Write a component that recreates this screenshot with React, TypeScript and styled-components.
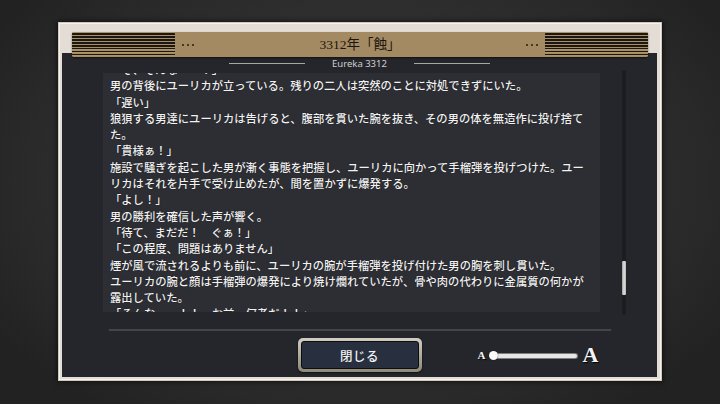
import React, { useLayoutEffect, useRef } from "react";
import styled, { createGlobalStyle } from "styled-components";

const GlobalStyle = createGlobalStyle`
  html, body { margin: 0; padding: 0; width: 720px; height: 404px; overflow: hidden; }
  body { background: #2a2a2a; font-family: "Noto Sans CJK JP", "Noto Sans", sans-serif; }
  * { box-sizing: border-box; }
`;

const Stage = styled.div`
  width: 720px;
  height: 404px;
  padding-top: 22px;
  display: flex;
  justify-content: center;
  align-items: flex-start;
  background:
    radial-gradient(ellipse 60% 70% at 50% 45%, #3a3a3a 0%, #313131 50%, #292929 80%, #222222 100%);
`;

const Frame = styled.div`
  width: 604px;
  height: 359px;
  background: #e3ddd6;
  padding: 0 5px 4px 4px;
  display: flex;
  flex-direction: column;
  box-shadow: 0 0 6px rgba(0, 0, 0, 0.75), inset 0 0 0 1px #cfc8be, inset 0 0 0 2px #f6f2ec;
`;

const Header = styled.div`
  position: relative;
  z-index: 1;
  margin: 10px 9px 0 10px;
  height: 25px;
  background: #a48a62;
  border-radius: 2px;
  display: flex;
  align-items: center;
  box-shadow: 0 1px 2px rgba(0, 0, 0, 0.55);
`;

const Stripes = styled.div`
  width: 103px;
  height: 100%;
  background: repeating-linear-gradient(
    to bottom,
    #b09569 0px,
    #a48a62 1.4px,
    #1b1814 1.4px,
    #1b1814 2.9px
  );
  border-radius: 2px;
`;

const Dots = styled.div<{ $side: "left" | "right" }>`
  display: flex;
  gap: 3px;
  margin: ${(p) => (p.$side === "left" ? "0 0 0 7px" : "0 7px 0 0")};
`;

const Dot = styled.span`
  width: 2px;
  height: 2px;
  border-radius: 50%;
  background: #231e17;
`;

const Title = styled.div`
  flex: 1;
  text-align: center;
  font-family: "Liberation Serif", "Noto Sans CJK JP", serif;
  font-size: 13.5px;
  color: #1a1610;
  line-height: 25px;
`;

const Panel = styled.div`
  margin-top: -4px;
  flex: 1;
  background: #25262b;
  padding-top: 4px;
  display: flex;
  flex-direction: column;
`;

const Subtitle = styled.div`
  height: 12px;
  display: flex;
  align-items: center;
  justify-content: center;
  gap: 27px;
  font-family: "Noto Sans", sans-serif;
  font-size: 9.5px;
  color: #cfcfcf;
`;

const SubLine = styled.span`
  width: 76px;
  height: 1px;
  background: #a6a6a6;
`;

const Body = styled.div`
  margin-top: 4px;
  padding-left: 41px;
  height: 239px;
  display: flex;
`;

const TextBox = styled.div`
  width: 497px;
  height: 239px;
  background: #2d2e34;
  overflow: hidden;
  padding: 0 10px 0 7px;
`;

const Para = styled.p`
  margin: 0;
  font-family: "Noto Sans CJK JP", sans-serif;
  font-weight: 500;
  font-size: 11.3px;
  line-height: 16.3px;
  color: #f2f2f2;
  text-shadow: 0 0 1px rgba(0, 0, 0, 0.8);
`;

const Track = styled.div`
  position: relative;
  margin: -3px 0 -3px 22px;
  width: 4px;
  background: #1c1d21;
`;

const Thumb = styled.div<{ $top: number; $height: number }>`
  position: absolute;
  left: 0;
  width: 4px;
  top: ${(p) => p.$top}px;
  height: ${(p) => p.$height}px;
  background: linear-gradient(to right, #9c9c9c, #e0e0e0 50%, #b4b4b4);
  border-radius: 1px;
`;

const Divider = styled.div`
  margin: 17px 0 0 47px;
  width: 502px;
  height: 2px;
  background: #42464c;
`;

const Footer = styled.div`
  margin-top: 7px;
  height: 34px;
  display: grid;
  grid-template-columns: 1fr auto 1fr;
  align-items: center;
`;

const CloseButton = styled.button`
  grid-column: 2;
  width: 124px;
  height: 34px;
  padding: 3px;
  border: none;
  border-radius: 5px;
  background: linear-gradient(to bottom, #d3cec1, #a8a394 60%, #8d887a);
  box-shadow: 0 1px 2px rgba(0, 0, 0, 0.6);
  cursor: pointer;
`;

const ButtonFace = styled.span`
  display: flex;
  align-items: center;
  justify-content: center;
  width: 100%;
  height: 100%;
  border: 1px solid #0d0e11;
  border-radius: 3px;
  background: #28303f;
  color: #f2f2f2;
  font-family: "Noto Sans CJK JP", sans-serif;
  font-weight: 500;
  font-size: 12.5px;
  letter-spacing: 0.5px;
`;

const SizeControl = styled.div`
  grid-column: 3;
  display: flex;
  align-items: center;
  padding-left: 56px;
`;

const Glyph = styled.span<{ $size: number }>`
  font-family: "Liberation Serif", serif;
  font-weight: bold;
  font-size: ${(p) => p.$size}px;
  line-height: 1;
  color: #f4f4f4;
  text-shadow: 1px 1px 1px #000;
`;

const SliderTrack = styled.div`
  position: relative;
  margin: 1px 5px 0 8px;
  width: 84px;
  height: 4px;
  border-radius: 2px;
  background: #e6e6e6;
  box-shadow: 0 0 0 1px #7d7d7d;
`;

const Knob = styled.div`
  position: absolute;
  left: -4px;
  top: -2.5px;
  width: 9px;
  height: 9px;
  border-radius: 50%;
  background: #fafafa;
  box-shadow: 0 0 1px #000;
`;

const paragraphs = [
  "「そ、そんな……！」",
  "男の背後にユーリカが立っている。残りの二人は突然のことに対処できずにいた。",
  "「遅い」",
  "狼狽する男達にユーリカは告げると、腹部を貫いた腕を抜き、その男の体を無造作に投げ捨てた。",
  "「貴様ぁ！」",
  "施設で騒ぎを起こした男が漸く事態を把握し、ユーリカに向かって手榴弾を投げつけた。ユーリカはそれを片手で受け止めたが、間を置かずに爆発する。",
  "「よし！」",
  "男の勝利を確信した声が響く。",
  "「待て、まだだ！　ぐぁ！」",
  "「この程度、問題はありません」",
  "煙が風で流されるよりも前に、ユーリカの腕が手榴弾を投げ付けた男の胸を刺し貫いた。",
  "ユーリカの腕と顔は手榴弾の爆発により焼け爛れていたが、骨や肉の代わりに金属質の何かが露出していた。",
  "「そんな……！！　お前、何者だ！！」",
  "「私はユーリカ。それ以上でも、それ以下でもありません」",
  "最後の男が崩れ落ちると、施設には再び静寂が戻った。",
];

export default function App() {
  const boxRef = useRef<HTMLDivElement>(null);
  useLayoutEffect(() => {
    if (boxRef.current) boxRef.current.scrollTop = 12;
  }, []);

  return (
    <>
      <GlobalStyle />
      <Stage>
        <Frame>
          <Header>
            <Stripes />
            <Dots $side="left">
              <Dot />
              <Dot />
              <Dot />
            </Dots>
            <Title>3312年「蝕」</Title>
            <Dots $side="right">
              <Dot />
              <Dot />
              <Dot />
            </Dots>
            <Stripes />
          </Header>
          <Panel>
            <Subtitle>
              <SubLine />
              <span>Eureka 3312</span>
              <SubLine />
            </Subtitle>
            <Body>
              <TextBox ref={boxRef}>
                {paragraphs.map((t, i) => (
                  <Para key={i}>{t}</Para>
                ))}
              </TextBox>
              <Track>
                <Thumb $top={191} $height={34} />
              </Track>
            </Body>
            <Divider />
            <Footer>
              <CloseButton>
                <ButtonFace>閉じる</ButtonFace>
              </CloseButton>
              <SizeControl>
                <Glyph $size={11}>A</Glyph>
                <SliderTrack>
                  <Knob />
                </SliderTrack>
                <Glyph $size={22}>A</Glyph>
              </SizeControl>
            </Footer>
          </Panel>
        </Frame>
      </Stage>
    </>
  );
}
